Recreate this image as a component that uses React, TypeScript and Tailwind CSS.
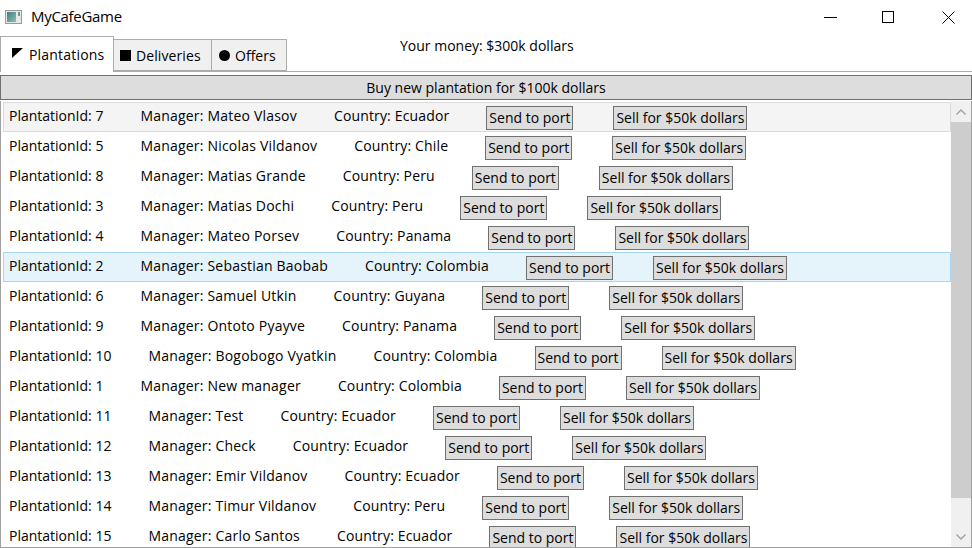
import React from 'react';

const plantations: [number, string, string][] = [
  [7, 'Mateo Vlasov', 'Ecuador'],
  [5, 'Nicolas Vildanov', 'Chile'],
  [8, 'Matias Grande', 'Peru'],
  [3, 'Matias Dochi', 'Peru'],
  [4, 'Mateo Porsev', 'Panama'],
  [2, 'Sebastian Baobab', 'Colombia'],
  [6, 'Samuel Utkin', 'Guyana'],
  [9, 'Ontoto Pyayve', 'Panama'],
  [10, 'Bogobogo Vyatkin', 'Colombia'],
  [1, 'New manager', 'Colombia'],
  [11, 'Test', 'Ecuador'],
  [12, 'Check', 'Ecuador'],
  [13, 'Emir Vildanov', 'Ecuador'],
  [14, 'Timur Vildanov', 'Peru'],
  [15, 'Carlo Santos', 'Ecuador'],
];

function WinButton({ children }: { children: React.ReactNode }) {
  return (
    <button className="h-[24px] mt-[2px] px-[2px] bg-[#dddddd] border border-[#707070] text-black leading-none whitespace-nowrap">
      {children}
    </button>
  );
}

function TitleBar() {
  return (
    <div className="h-[36px] flex items-center">
      {/* app icon */}
      <svg width="17" height="14" viewBox="0 0 17 14" className="ml-[5px] mt-[-2px]">
        <rect x="0.5" y="0.5" width="16" height="13" fill="#e8e8e8" stroke="#9a9a9a" />
        <defs>
          <linearGradient id="ic" x1="0" y1="0" x2="1" y2="1">
            <stop offset="0" stopColor="#3d7f8a" />
            <stop offset="1" stopColor="#8fc0a8" />
          </linearGradient>
        </defs>
        <rect x="2" y="2" width="9" height="10" fill="url(#ic)" />
        <rect x="13" y="2" width="2" height="4" fill="#6f8f9a" />
      </svg>
      <span className="ml-[9px] mt-[-3px] text-[15px] tracking-[-0.3px] text-black">MyCafeGame</span>
      <div className="ml-auto mr-[-3px] flex h-full">
        <div className="w-[58px] flex items-center justify-center">
          <div className="w-[13px] h-px bg-black mt-[-2px]" />
        </div>
        <div className="w-[58px] flex items-center justify-center">
          <div className="w-[12px] h-[12px] border border-black mt-[-2px]" />
        </div>
        <div className="w-[58px] flex items-center justify-center">
          <svg width="13" height="13" viewBox="0 0 13 13" className="mt-[-2px] ml-[4px]">
            <path d="M0.5 0.5 L12.5 12.5 M12.5 0.5 L0.5 12.5" stroke="#000" strokeWidth="1" />
          </svg>
        </div>
      </div>
    </div>
  );
}

function Tabs() {
  return (
    <div className="h-[35px] flex items-end text-[14px]">
      <div className="relative z-10 h-[36px] mb-[-1px] w-[114px] bg-white border border-b-0 border-[#acacac] flex items-center pl-[11px] gap-[6px]">
        <svg width="11" height="10" viewBox="0 0 11 10" className="mt-[-4px]">
          <path d="M0 0 H11 L0 10 Z" fill="#000" />
        </svg>
        <span className="mt-[-1px] tracking-[0.2px]">Plantations</span>
      </div>
      <div className="h-[32px] w-[98px] bg-[#f0f0f0] border border-l-0 border-[#acacac] flex items-center pl-[6px] gap-[5px]">
        <div className="w-[11px] h-[11px] bg-black" />
        <span className="tracking-[0.1px]">Deliveries</span>
      </div>
      <div className="h-[32px] w-[75px] bg-[#f0f0f0] border border-l-0 border-[#acacac] flex items-center pl-[7px] gap-[5px]">
        <div className="w-[11px] h-[11px] rounded-full bg-black" />
        <span>Offers</span>
      </div>
      <div className="self-start mt-[-1px] ml-[113px]">Your money: $300k dollars</div>
    </div>
  );
}

function Chevron({ up }: { up?: boolean }) {
  return (
    <svg width="10" height="6" viewBox="0 0 10 6">
      <path d={up ? 'M0.5 5.5 L5 1 L9.5 5.5' : 'M0.5 0.5 L5 5 L9.5 0.5'} stroke="#a0a0a0" strokeWidth="1.4" fill="none" />
    </svg>
  );
}

function PlantationRow({ id, manager, country }: { id: number; manager: string; country: string }) {
  const first = id === 7;
  const selected = id === 2;
  return (
    <div
      className={
        'h-[30px] shrink-0 flex items-center pl-[5px] border whitespace-nowrap ' +
        (selected
          ? 'bg-[#e5f3fb] border-[#a8d6f2]'
          : first
          ? 'bg-[#f4f4f4] border-[#dadada]'
          : 'border-transparent')
      }
    >
      <span className="mr-[37px] mb-[3px]">PlantationId: {id}</span>
      <span className="mr-[37px] mb-[3px] tracking-[0.2px]">Manager: {manager}</span>
      <span className="mr-[37px] mb-[3px] tracking-[0.15px]">Country: {country}</span>
      <div className="mr-[40px] flex">
        <WinButton>Send to port</WinButton>
      </div>
      <WinButton>Sell for $50k dollars</WinButton>
    </div>
  );
}

export default function App() {
  return (
    <div className="w-[972px] h-[548px] bg-white overflow-hidden flex flex-col text-black text-[14px] font-['Open_Sans',sans-serif]">
      <TitleBar />
      <Tabs />
      <div className="flex-1 min-h-0 border-t border-[#acacac] pt-[3px] flex flex-col">
        <button className="h-[25px] shrink-0 w-full bg-[#dddddd] border border-[#707070] text-[14px]">
          Buy new plantation for $100k dollars
        </button>
        <div className="flex-1 min-h-0 flex border-x border-b border-[#a0a0a0] mt-[1px]">
          <div className="flex-1 min-w-0 overflow-hidden pl-[2px] pt-[1px] flex flex-col">
            {plantations.map(([id, manager, country]) => (
              <PlantationRow key={id} id={id} manager={manager} country={country} />
            ))}
          </div>
          <div className="w-[20px] flex flex-col bg-[#f0f0f0]">
            <div className="h-[21px] flex items-center justify-center">
              <Chevron up />
            </div>
            <div className="h-[376px] bg-[#cdcdcd]" />
            <div className="flex-1" />
            <div className="h-[21px] flex items-center justify-center">
              <Chevron />
            </div>
          </div>
        </div>
      </div>
    </div>
  );
}
